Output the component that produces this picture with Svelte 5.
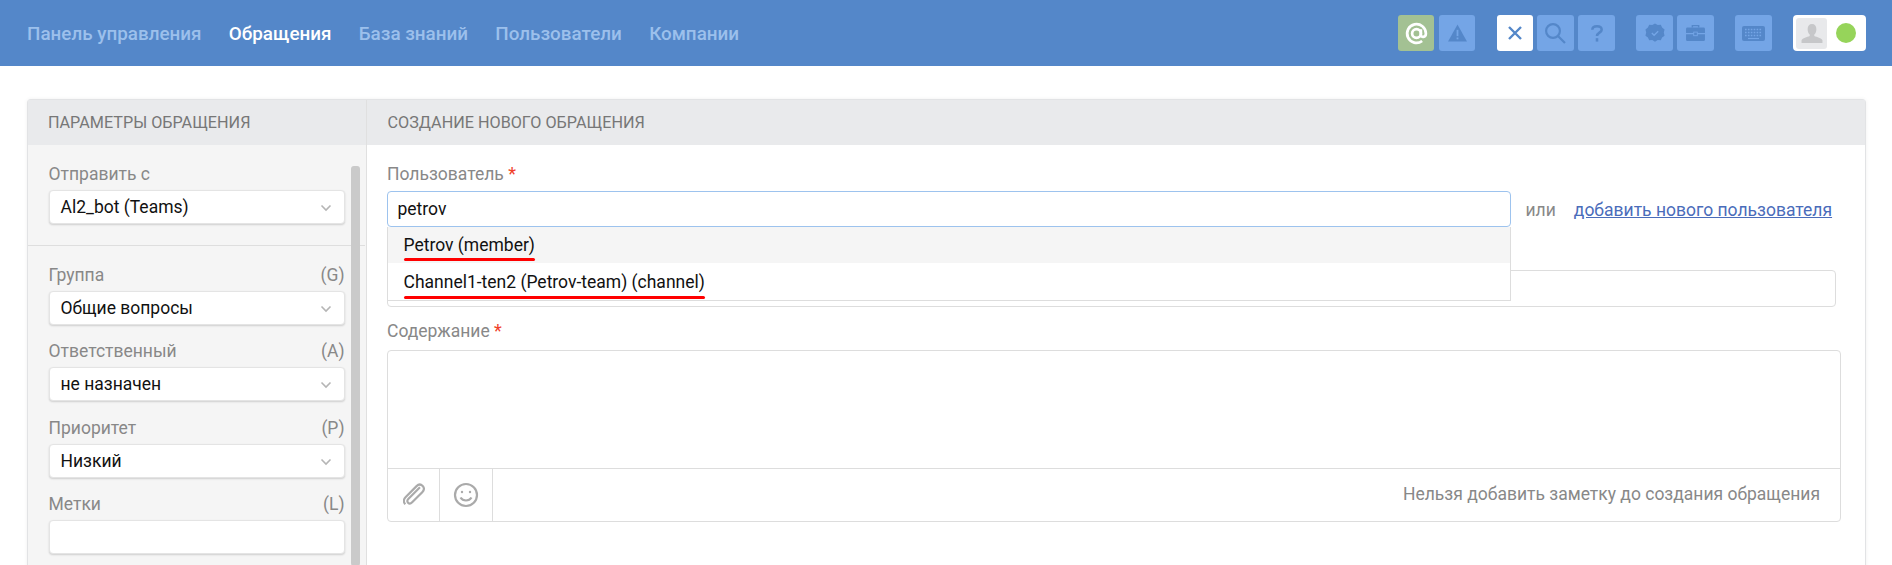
<script>
  const nav = [
    { label: 'Панель управления' },
    { label: 'Обращения', active: true },
    { label: 'База знаний' },
    { label: 'Пользователи' },
    { label: 'Компании' }
  ];
  const fields = [
    { label: 'Группа', key: '(G)', value: 'Общие вопросы' },
    { label: 'Ответственный', key: '(A)', value: 'не назначен' },
    { label: 'Приоритет', key: '(P)', value: 'Низкий' }
  ];
</script>

{#snippet chevron()}
  <svg class="chev" width="12" height="8" viewBox="0 0 12 8"><path d="M1.5 1.5 6 6l4.5-4.5" fill="none" stroke="#b5b5b5" stroke-width="1.6"/></svg>
{/snippet}

<header class="top">
  <nav class="nav">
    {#each nav as item}
      <span class="nav-item" class:active={item.active}>{item.label}</span>
    {/each}
  </nav>
  <div class="tools">
    <div class="group first">
      <div class="tile narrow green">
        <svg width="25" height="25" viewBox="0 0 24 24" fill="none" stroke="#fff" stroke-width="2.6"><circle cx="12" cy="12" r="4.2"/><path d="M16.2 8v5.2c0 3 4.8 3 4.8-1.2a9 9 0 1 0-3.6 7.2"/></svg>
      </div>
      <div class="tile narrow">
        <svg width="21" height="18" viewBox="0 0 22 20"><path d="M11 .5 21.500 19.500H.5z" fill="#5487c9"/><rect x="10" y="6.500" width="2" height="7" fill="#74a5e6"/><rect x="10" y="15" width="2" height="2" fill="#74a5e6"/></svg>
      </div>
    </div>
    <div class="group second">
      <div class="tile narrow white">
        <svg width="16" height="16" viewBox="0 0 16 16"><path d="M2 2l12 12M14 2 2 14" stroke="#5487c9" stroke-width="2.400"/></svg>
      </div>
      <div class="tile">
        <svg width="21" height="21" viewBox="0 0 21 21" fill="none" stroke="#5487c9" stroke-width="2.200"><circle cx="8" cy="8" r="6.900"/><path d="M13 13l7 7"/></svg>
      </div>
      <div class="tile">
        <svg width="12" height="17" viewBox="0 0 14 20" fill="none" stroke="#5487c9" stroke-width="3"><path d="M1.500 5.500C1.500 2.800 4 1.500 7 1.500s5.500 1.300 5.500 4c0 3.600-5.500 3.400-5.500 7.500"/><path d="M7 15.500V19.500"/></svg>
      </div>
    </div>
    <div class="group">
      <div class="tile">
        <svg width="20" height="20" viewBox="0 0 22 22"><path d="M11 .5l3 1.700 3.400-.3 1.400 3.100 2.700 2.100-.8 3.400.8 3.400-2.700 2.100-1.400 3.100-3.400-.3-3 1.700-3-1.700-3.400.3-1.400-3.100L.5 13.900l.8-3.400-.8-3.400 2.700-2.100 1.400-3.100 3.400.3z" fill="#5487c9"/><path d="M7.500 11l2.500 2.500 4.500-4.500" fill="none" stroke="#74a5e6" stroke-width="1.500"/></svg>
      </div>
      <div class="tile">
        <svg width="21" height="18" viewBox="0 0 22 20"><path d="M7.500 4V1.800h7V4" fill="none" stroke="#5487c9" stroke-width="1.600"/><path d="M2 4h18a1.500 1.500 0 0 1 1.500 1.500V10h-21V5.500A1.500 1.500 0 0 1 2 4zM.5 11.500h21v6A1.500 1.500 0 0 1 20 19H2a1.500 1.500 0 0 1-1.500-1.500z" fill="#5487c9"/><rect x="9" y="9" width="4" height="4" fill="#5487c9" stroke="#74a5e6"/></svg>
      </div>
    </div>
    <div class="group">
      <div class="tile">
        <svg width="23" height="15" viewBox="0 0 23 15"><rect width="23" height="15" rx="2" fill="#5487c9"/><path d="M3 3.500h17M3 6.500h17M3 9.500h17" stroke="#74a5e6" stroke-width="1.400" stroke-dasharray="1.600 1.300"/><path d="M6 12.500h11" stroke="#74a5e6" stroke-width="1.200"/></svg>
      </div>
    </div>
    <div class="profile">
      <div class="avatar">
        <svg width="22" height="19" viewBox="0 0 22 20"><path d="M11 0c3 0 4.600 2.200 4.600 5.400 0 2.500-1 4.600-2.200 5.700v1.500c2.800 1.200 7.600 2 8.600 4.600V20H0v-2.800c1-2.600 5.800-3.400 8.600-4.600v-1.500C7.400 10 6.400 7.900 6.400 5.400 6.400 2.200 8 0 11 0z" fill="#c6c7c9"/></svg>
      </div>
      <span class="dot"></span>
    </div>
  </div>
</header>

<main class="page">
  <section class="panel">
    <aside class="side">
      <h2 class="band">ПАРАМЕТРЫ ОБРАЩЕНИЯ</h2>
      <div class="scrollbar"></div>
      <div class="side-first">
        <div class="lbl">Отправить с</div>
        <div class="select">Al2_bot (Teams){@render chevron()}</div>
      </div>
      <div class="side-rest">
        {#each fields as f}
          <div class="field">
            <div class="lbl"><span>{f.label}</span><span>{f.key}</span></div>
            <div class="select">{f.value}{@render chevron()}</div>
          </div>
        {/each}
        <div class="field">
          <div class="lbl"><span>Метки</span><span>(L)</span></div>
          <div class="select"></div>
        </div>
      </div>
    </aside>
    <div class="content">
      <h2 class="band">СОЗДАНИЕ НОВОГО ОБРАЩЕНИЯ</h2>
      <div class="form">
        <div class="lbl plain">Пользователь <i>*</i></div>
        <div class="user-row">
          <div class="user-box">
            <div class="input focus">petrov</div>
            <div class="menu">
              <div class="opt hover"><span class="mark">Petrov (member)</span></div>
              <div class="opt"><span class="mark">Channel1-ten2 (Petrov-team) (channel)</span></div>
            </div>
          </div>
          <span class="or">или</span>
          <span class="link">добавить нового пользователя</span>
        </div>
        <div class="subject"></div>
        <div class="lbl plain body-lbl">Содержание <i>*</i></div>
        <div class="editor">
          <div class="area"></div>
          <div class="bar">
            <div class="bar-btn">
              <svg width="22" height="24" viewBox="0 0 24 26" fill="none" stroke="#aaa" stroke-width="2.400"><path d="M18.500 4.500 6 17c-1.800 1.800-1.500 3.500-.5 4.500s2.800 1.200 4.500-.5L21 10c2.700-2.700 2-5.300.5-6.800S17.300.8 14.800 3.300L3 15.200c-3 3-2.300 6-.5 7.800"/></svg>
            </div>
            <div class="bar-btn wide">
              <svg width="26" height="26" viewBox="0 0 26 26" fill="none" stroke="#aaa" stroke-width="2.200"><circle cx="13" cy="13" r="11"/><path d="M7.500 15.500c2.500 4 8.500 4 11 0"/><circle cx="9" cy="10" r="1.200" fill="#aaa" stroke="none"/><circle cx="17" cy="10" r="1.200" fill="#aaa" stroke="none"/></svg>
            </div>
            <div class="note">Нельзя добавить заметку до создания обращения</div>
          </div>
        </div>
      </div>
    </div>
  </section>
</main>

<style>
  :global(html), :global(body) { margin: 0; height: 565px; overflow: hidden; background: #fff; }
  :global(body) { font-family: Roboto, "Liberation Sans", sans-serif; font-size: 17.5px; color: #111; }
  .top { height: 66px; background: #5487c9; display: flex; align-items: center; justify-content: space-between; padding: 0 26px 0 27px; box-sizing: border-box; }
  .nav { display: flex; gap: 27.300px; padding-top: 2px; }
  .nav-item { font-size: 18.850px; font-weight: 500; color: #9cc0ec; }
  .nav-item.active { color: #fff; }
  .tools { display: flex; gap: 21px; align-items: center; }
  .group { display: flex; gap: 4px; }
  .group.first { gap: 5px; }
  .group.second { margin-left: 1px; }
  .tile { width: 37px; height: 36px; border-radius: 3px; background: #74a5e6; display: flex; align-items: center; justify-content: center; }
  .tile.narrow { width: 36px; }
  .tile.green { background: #a3c193; }
  .tile.white { background: #fff; }
  .profile { width: 73px; height: 36px; border-radius: 4px; background: #fff; box-sizing: border-box; padding: 2px 10px 2px 3px; display: flex; align-items: center; justify-content: space-between; }
  .avatar { width: 31px; height: 31px; border-radius: 3px; background: #e8e9eb; display: flex; align-items: flex-end; justify-content: center; box-sizing: border-box; padding-bottom: 6px; }
  .dot { width: 20px; height: 20px; border-radius: 50%; background: #96d45a; }
  .page { padding: 33px 26px 0 27px; }
  .panel { display: flex; height: 520px; border: 1px solid #e2e3e5; border-bottom: 0; border-radius: 4px 4px 0 0; box-shadow: 0 0 4px rgba(0,0,0,.06); box-sizing: border-box; }
  .band { height: 45px; margin: 0; background: #e9eaec; font-size: 16.200px; font-weight: 400; color: #777; line-height: 45px; padding-left: 20.500px; box-sizing: border-box; }
  .side { position: relative; width: 339px; flex: none; background: #f5f5f5; border-right: 1px solid #e0e0e0; box-sizing: border-box; }
  .side .band { padding-left: 20px; }
  .scrollbar { position: absolute; left: 323px; top: 66px; width: 9px; height: 400px; background: #cacaca; border-radius: 3px; }
  .side-first { padding: 19px 20px 22px 20.500px; border-bottom: 1px solid #dedede; margin-right: 1px; height: 101px; box-sizing: border-box; }
  .side-rest { padding: 19px 20px 0 20.500px; }
  .lbl { display: flex; justify-content: space-between; height: 20px; line-height: 20px; color: #888; margin-bottom: 6px; }
  .field { margin-bottom: 16.300px; }
  .select { position: relative; height: 34px; width: 296px; box-sizing: border-box; background: #fff; border-radius: 4px; border: 1px solid #e4e4e4; box-shadow: 0 1px 2px rgba(0,0,0,.16); padding-left: 11px; line-height: 32px; color: #111; }
  .field .lbl, .select { width: 296px; }
  .chev { position: absolute; right: 12px; top: 13px; }
  .content { flex: 1; min-width: 0; }
  .form { padding: 19px 24px 0 20px; }
  .lbl.plain { display: block; margin-bottom: 7px; }
  .lbl i { font-style: normal; color: #f0412a; font-size: 18px; }
  .user-row { display: flex; align-items: center; height: 36px; }
  .user-box { position: relative; width: 1124px; flex: none; }
  .input { height: 36px; box-sizing: border-box; border: 1px solid #9dc3ee; border-radius: 4px; line-height: 34px; padding-left: 9.500px; background: #fff; }
  .menu { position: absolute; left: 0; top: 36px; width: 100%; box-sizing: border-box; background: #fff; border: 1px solid #ddd; border-top: 0; z-index: 2; }
  .opt { height: 37px; line-height: 38px; padding-left: 15.500px; box-sizing: border-box; }
  .opt.hover { height: 36px; line-height: 36px; background: #f5f5f5; }
  .mark { position: relative; display: inline-block; }
  .mark::after { content: ''; position: absolute; left: 0; right: 0; bottom: 2px; height: 3px; border-radius: 2px; background: #f00; }
  .or { margin-left: 14.500px; padding-top: 2px; color: #888; }
  .link { margin-left: 18px; padding-top: 2px; color: #4a6cba; text-decoration: underline; }
  .subject { margin: 43px 5px 0 0; height: 37px; border: 1px solid #ddd; border-radius: 4px; box-sizing: border-box; }
  .lbl.body-lbl { margin-top: 14px; margin-bottom: 9px; }
  .editor { height: 172px; border: 1px solid #ddd; border-radius: 4px; box-sizing: border-box; display: flex; flex-direction: column; }
  .area { height: 117px; border-bottom: 1px solid #ddd; }
  .bar { flex: 1; display: flex; align-items: stretch; }
  .bar-btn { width: 52px; border-right: 1px solid #ddd; display: flex; align-items: center; justify-content: center; box-sizing: border-box; }
  .bar-btn.wide { width: 53px; }
  .note { flex: 1; text-align: right; padding-right: 20px; color: #888; line-height: 51px; }
</style>
